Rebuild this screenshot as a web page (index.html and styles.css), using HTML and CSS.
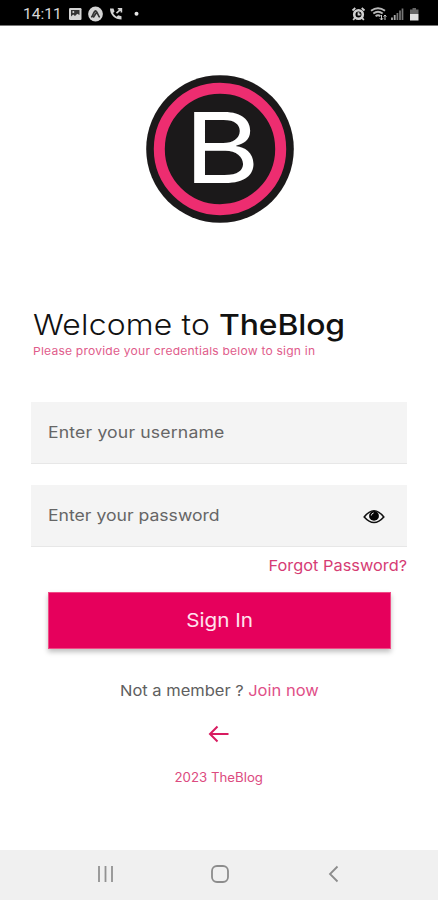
FILE: index.html
```html
<!DOCTYPE html>
<html lang="en">
<head>
<meta charset="utf-8">
<title>TheBlog</title>
<link rel="stylesheet" href="styles.css">
</head>
<body>
<div class="screen">
  <header class="status">
    <span class="time">14:11</span>
    <svg class="status-left" width="76" height="18" viewBox="0 0 76 18">
      <rect x="1" y="3" width="12.5" height="12" rx="1.2" fill="#d4d4d4"/>
      <path d="M3 5h8.500v5L9.300 8.700 7 11 5.200 9.500 3 11.500z" fill="#333"/>
      <circle cx="5.300" cy="7" r="1" fill="#d4d4d4"/>
      <circle cx="27.500" cy="9" r="7.400" fill="#d4d4d4"/>
      <path d="M23.300 12.200c1.600-1 2.600-6.400 4.200-6.400s2.600 5.400 4.200 6.400M25.200 12.500l4-6" fill="none" stroke="#333" stroke-width="1.700"/>
      <path d="M42 3.500c0 6.500 5 11 11.500 11v-3.200l-3.400-1-1.400 1.400c-1.700-.9-2.800-2.100-3.600-3.700l1.400-1.400-1-3.100z" fill="#d4d4d4"/>
      <path d="M48.500 8.200l4.500-4M49.800 3.800h3.600v3.600" fill="none" stroke="#d4d4d4" stroke-width="1.600"/>
      <circle cx="68.500" cy="8.700" r="2" fill="#e6e6e6"/>
    </svg>
    <svg class="status-right" width="68" height="18" viewBox="0 0 68 18">
      <circle cx="7.500" cy="9.500" r="4.300" fill="none" stroke="#d0d0d0" stroke-width="2.600"/>
      <path d="M7.500 7.200v2.500h2M1.500 5.500L4.300 3M13.500 5.500L10.700 3M3.800 13L2.200 15M11.200 13l1.600 2" fill="none" stroke="#d0d0d0" stroke-width="1.800"/>
      <path d="M20 5.800q7-5 14 0M22.300 8.500q4.700-3.500 9.400 0M24.600 11.200q2.400-1.800 4.800 0" fill="none" stroke="#b8b8b8" stroke-width="1.900"/>
      <path d="M30.500 10v5M28.800 13.200l1.700 1.800 1.500-1.800M34 15v-5M32.600 11.600L34 10l1.400 1.600" fill="none" stroke="#ccc" stroke-width="1"/>
      <path d="M41 15v-2.500M43.700 15v-5" stroke="#aaa" stroke-width="1.800"/>
      <path d="M46.400 15V8M49 15V5.500M51.500 15V3.500" stroke="#777" stroke-width="1.700"/>
      <path d="M59 4.500h2.500V3h3.500v1.500h2.500V9H59z" fill="#666"/>
      <path d="M59 9h8.500v6.500H59z" fill="#e0e0e0"/>
    </svg>
  </header>
  <main class="content">
    <svg class="logo" width="150" height="150" viewBox="0 0 150 150">
      <circle cx="75" cy="75" r="73.800" fill="#1b191a"/>
      <circle cx="75" cy="75" r="60.700" fill="none" stroke="#ed2d70" stroke-width="11"/>
      <text class="logo-letter" x="39" y="108.500" textLength="76" lengthAdjust="spacingAndGlyphs">B</text>
    </svg>
    <h1 class="title"><span class="welcome">Welcome to</span> <span class="brand">TheBlog</span></h1>
    <p class="subtitle">Please provide your credentials below to sign in</p>
    <div class="field"><span class="username">Enter your username</span></div>
    <div class="field"><span class="password">Enter your password</span>
      <svg class="eye" width="22" height="16" viewBox="0 0 22 16">
        <path d="M1.200 8Q11-4.500 20.800 8Q11 19 1.200 8z" fill="#f4f4f4" stroke="#111" stroke-width="1.600"/>
        <circle cx="11" cy="6.900" r="4.900" fill="#050505"/>
        <path d="M8.300 6.500q.2-2.200 2.400-2.600" fill="none" stroke="#ddd" stroke-width="1"/>
      </svg>
    </div>
    <a class="forgot">Forgot Password?</a>
    <button class="signin"><span class="signin-label">Sign In</span></button>
    <p class="member"><span>Not a member ?</span><a class="join">Join now</a></p>
    <svg class="back" width="22" height="18" viewBox="0 0 22 18"><path d="M20.500 9H2.500M9.500 1.500L2 9l7.500 7.500" fill="none" stroke="#d81b60" stroke-width="2"/></svg>
    <p class="copy">2023 TheBlog</p>
  </main>
  <nav class="navbar">
    <svg width="18" height="18" viewBox="0 0 18 18"><path d="M2 1v16M8.500 1v16M15 1v16" stroke="#929292" stroke-width="1.800"/></svg>
    <svg width="18" height="18" viewBox="0 0 18 18"><rect x="1" y="1" width="16" height="16" rx="5" fill="none" stroke="#8c8c8c" stroke-width="1.800"/></svg>
    <svg width="18" height="18" viewBox="0 0 18 18"><path d="M12.500 1.500L5 9l7.500 7.500" fill="none" stroke="#8c8c8c" stroke-width="1.800"/></svg>
  </nav>
</div>
</body>
</html>
```
FILE: styles.css
```css
* { box-sizing: border-box; }
body { margin: 0; background: #fff; font-family: Inter, "Open Sans", sans-serif; }
h1, p { margin: 0; font-weight: 400; white-space: nowrap; }
svg { display: block; flex: none; }
.screen { width: 438px; height: 900px; display: flex; flex-direction: column; }
.status { height: 26px; flex: none; background: #000; border-bottom: 1px solid #777; display: flex; align-items: center; padding: 3px 19px 0 23px; }
.time { width: 37px; font: 400 15.5px/18px Roboto, sans-serif; color: #d8d8d8; }
.status-left { margin-left: 8px; }
.status-right { margin-left: auto; }
.content { flex: 1; display: flex; flex-direction: column; padding: 48px 31px 0; }
.logo { align-self: center; margin-left: 2px; }
.logo-letter { font: 400 98px Inter, sans-serif; fill: #fff; }

/* Labels are set slightly extended */
.welcome, .brand, .subtitle, .username, .password { transform: scaleX(1.1); transform-origin: left; }

.title { margin: 83px 0 0 2px; font-size: 29px; line-height: 36px; display: flex; color: #111; }
.welcome { width: 186px; font-weight: 300; letter-spacing: .15px; }
.brand { font-weight: 500; letter-spacing: -.1px; }
.subtitle { margin-left: 2px; font-size: 11px; line-height: 16px; letter-spacing: .18px; color: #df5c8b; }
.field { margin-top: 21px; height: 62px; background: #f4f4f4; border-bottom: 1px solid #e7e7e7; display: flex; align-items: center; justify-content: space-between; padding: 0 22px 2px 17px; font-size: 16px; color: #666; }
.username { letter-spacing: .15px; }
.subtitle + .field { margin-top: 43px; }
.eye { margin-top: 4px; }
.forgot { align-self: flex-end; transform: scaleX(1.09); transform-origin: right; margin-top: 9px; font-size: 15px; line-height: 20px; color: #d63c74; }
.signin { margin: 16px 16px 0 17px; height: 57px; border: 1px solid #ef4c86; background: #e6005c; color: #ffe3ee; font: 400 19px Inter, sans-serif; box-shadow: 0 3px 5px rgba(0,0,0,.25); }
.signin-label { display: inline-block; transform: scaleX(1.09); }
.member { align-self: center; transform: scaleX(1.1); display: flex; gap: 4px; margin-top: 32px; font-size: 15px; line-height: 20px; color: #606060; }
.join { color: #df5088; }
.back { align-self: center; margin-top: 24px; }
.copy { align-self: center; transform: scaleX(1.06); margin-top: 26px; font-size: 12.500px; line-height: 18px; color: #dc4b80; }
.navbar { height: 50px; flex: none; background: #f0f0f0; display: flex; justify-content: space-between; align-items: center; padding: 0 95px 2px 97px; }
```
